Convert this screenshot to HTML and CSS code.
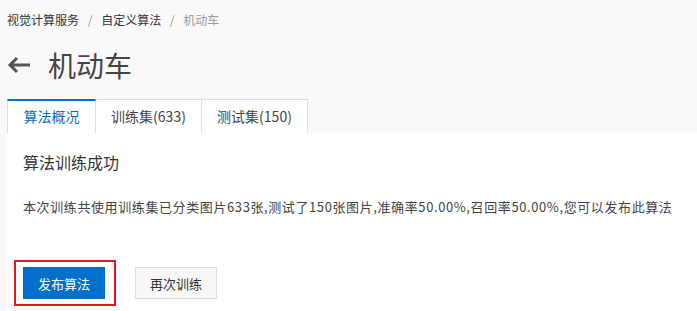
FILE: index.html
```html
<!DOCTYPE html>
<html>
  <head>
    <meta charset="UTF-8" />
    <title>机动车</title>
    <link rel="stylesheet" href="styles.css">
  </head>

  <body>
    <div class="page">
      <div class="breadcrumb">
        <span class="crumb">视觉计算服务</span>
        <span class="sep">/</span>
        <span class="crumb">自定义算法</span>
        <span class="sep">/</span>
        <span class="crumb current">机动车</span>
      </div>

      <div class="page-title">
        <svg class="back-icon" width="24" height="18" viewBox="0 0 24 18">
          <path d="M23 9H3M10 2L3 9l7 7" fill="none" stroke="#555" stroke-width="3" />
        </svg>
        <h1>机动车</h1>
      </div>

      <div class="tabs">
        <div class="tab active">算法概况</div>
        <div class="tab">训练集(633)</div>
        <div class="tab">测试集(150)</div>
      </div>

      <div class="panel">
        <h2 class="result-title">算法训练成功</h2>
        <p class="result-text">本次训练共使用训练集已分类图片633张,测试了150张图片,准确率50.00%,召回率50.00%,您可以发布此算法</p>
        <div class="actions">
          <div class="highlight">
            <button class="btn btn-primary">发布算法</button>
          </div>
          <button class="btn btn-default">再次训练</button>
        </div>
      </div>
    </div>
  </body>
</html>
```

FILE: styles.css
```css
body {
  margin: 0;
  padding: 0;
  background: #f9f9f9;
  font-family: "Noto Sans CJK SC", "Open Sans", sans-serif;
  color: #333;
}

.page {
  padding-left: 7px;
  height: 311px;
  display: flex;
  flex-direction: column;
}

.breadcrumb {
  padding-top: 12px;
  font-size: 12px;
  line-height: 16px;
  color: #333;
}

.sep {
  color: #999;
  margin: 0 6px;
}

.crumb.current {
  color: #999;
}

.page-title {
  display: flex;
  align-items: center;
  margin-top: 17px;
  height: 40px;
}

.back-icon {
  margin-left: 0;
  margin-right: 17px;
}

.page-title h1 {
  margin: 0;
  font-size: 28px;
  font-weight: normal;
  line-height: 40px;
  color: #444;
}

.tabs {
  display: flex;
  margin-top: 14px;
}

.tab {
  box-sizing: border-box;
  width: 106px;
  height: 34px;
  line-height: 32px;
  text-align: center;
  font-size: 14px;
  color: #444;
  background: #fff;
  border: 1px solid #ddd;
  border-bottom: none;
  border-left: none;
}

.tab:first-child {
  width: 89px;
  border-left: 1px solid #ddd;
}

.tab.active {
  color: #0070cc;
  border-top: 2px solid #0070cc;
  line-height: 31px;
}

.panel {
  flex: 1;
  background: #fff;
  padding: 17px 16px 0 16px;
}

.result-title {
  margin: 0;
  font-size: 16px;
  font-weight: normal;
  line-height: 24px;
  color: #333;
}

.result-text {
  margin: 23px 0 0;
  font-size: 13px;
  letter-spacing: 0.6px;
  line-height: 20px;
  color: #444;
  white-space: nowrap;
}

.actions {
  display: flex;
  align-items: center;
  margin-top: 50px;
}

.highlight {
  position: relative;
}

.highlight::before {
  content: "";
  position: absolute;
  left: -9px;
  top: -7px;
  right: -11px;
  bottom: -7px;
  border: 2px solid #e8161c;
}

.btn {
  height: 32px;
  width: 82px;
  font-family: inherit;
  font-size: 13px;
  border-radius: 0;
  cursor: pointer;
}

.btn-primary {
  background: #0070cc;
  color: #fff;
  border: 1px solid #0070cc;
}

.btn-default {
  margin-left: 30px;
  background: #f7f7f7;
  color: #333;
  border: 1px solid #ddd;
}
```
